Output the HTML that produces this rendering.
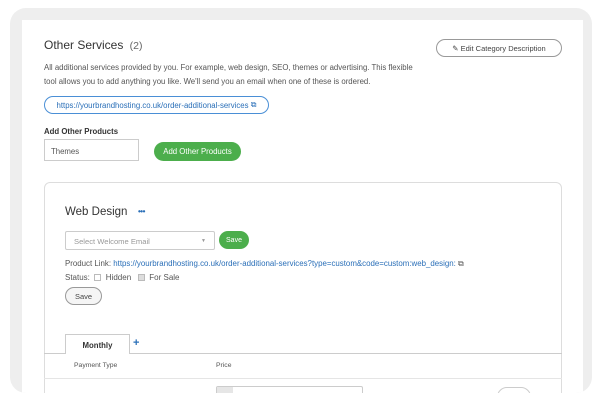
<!DOCTYPE html>
<html><head><style>
*{box-sizing:border-box;margin:0;padding:0}
html,body{width:600px;height:400px;overflow:hidden}
body{background:#fff;font-family:"Liberation Sans",sans-serif;position:relative;color:#333}
.frame{position:absolute;left:10px;top:8px;width:582px;height:385px;background:#eeeeee;border-radius:16px;overflow:hidden}
.inner{position:absolute;left:12px;top:12px;width:561px;height:373px;background:#fff;overflow:hidden}
.a{position:absolute;white-space:nowrap}
.pill{position:absolute;border-radius:10px;font-size:7.5px;display:flex;align-items:center;justify-content:center}
</style></head><body>
<div class="frame"><div class="inner">
<div style="position:absolute;left:-22px;top:-20px;width:600px;height:393px;overflow:hidden">
<div class="a" style="left:44px;top:38px;font-size:12px;color:#333">Other Services <span style="color:#666;font-size:10.5px">&nbsp;(2)</span></div>
<div class="pill" style="left:436px;top:39px;width:126px;height:18px;border:1px solid #999;color:#444">&#9998;&nbsp;Edit Category Description</div>
<div class="a" style="left:44px;top:61px;font-size:7.8px;line-height:13.5px;color:#555">All additional services provided by you. For example, web design, SEO, themes or advertising. This flexible<br>tool allows you to add anything you like. We'll send you an email when one of these is ordered.</div>
<div class="pill" style="left:44px;top:96px;width:225px;height:18px;border:1px solid #4a8fd6;color:#2a6fb8;font-size:7.8px">https://yourbrandhosting.co.uk/order-additional-services&nbsp;<span style="font-size:8px">&#10697;</span></div>
<div class="a" style="left:44px;top:127px;font-size:7.8px;font-weight:bold;color:#333">Add Other Products</div>
<div class="a" style="left:44px;top:139px;width:95px;height:22px;border:1px solid #ccc;font-size:7.8px;color:#555;padding:7px 6px">Themes</div>
<div class="pill" style="left:154px;top:142px;width:87px;height:19px;background:#4cae4c;color:#fff;font-size:7.8px">Add Other Products</div>
<div class="a" style="left:44px;top:182px;width:518px;height:230px;border:1px solid #ddd;border-radius:6px"></div>
<div class="a" style="left:65px;top:206px;font-size:11.5px;color:#333">Web Design</div>
<div class="a" style="left:138px;top:207px;font-size:8px;color:#2a6fb8;font-weight:bold;letter-spacing:-0.5px">•••</div>
<div class="a" style="left:65px;top:231px;width:150px;height:19px;border:1px solid #ccc;border-radius:2px;font-size:7.6px;color:#999;padding:5px 8px">Select Welcome Email<span style="position:absolute;right:8px;top:6px;font-size:5px">&#9660;</span></div>
<div class="pill" style="left:219px;top:231px;width:30px;height:18px;background:#4cae4c;color:#fff;font-size:7px">Save</div>
<div class="a" style="left:65px;top:259px;font-size:7.9px;color:#555">Product Link: <span style="color:#2a6fb8">https://yourbrandhosting.co.uk/order-additional-services?type=custom&amp;code=custom:web_design:</span> &#10697;</div>
<div class="a" style="left:65px;top:273px;font-size:8px;color:#555">Status: &nbsp;<span style="display:inline-block;width:7px;height:7px;border:1px solid #bbb;vertical-align:-1px"></span>&nbsp; Hidden &nbsp;&nbsp;<span style="display:inline-block;width:7px;height:7px;border:1px solid #bbb;background:#ddd;vertical-align:-1px"></span>&nbsp; For Sale</div>
<div class="pill" style="left:65px;top:287px;width:37px;height:18px;border:1px solid #999;color:#444;background:#f5f5f5">Save</div>
<div class="a" style="left:44px;top:353px;width:518px;height:1px;background:#ccc"></div>
<div class="a" style="left:65px;top:334px;width:65px;height:20px;border:1px solid #ccc;border-bottom:none;background:#fff;font-size:7.8px;font-weight:bold;color:#333;text-align:center;padding-top:6px">Monthly</div>
<div class="a" style="left:133px;top:337px;font-size:11px;color:#2a6fb8;font-weight:bold">+</div>
<div class="a" style="left:74px;top:362px;font-size:6.8px;color:#555">Payment Type</div>
<div class="a" style="left:216px;top:362px;font-size:6.8px;color:#555">Price</div>
<div class="a" style="left:44px;top:378px;width:518px;height:1px;background:#e5e5e5"></div>
<div class="a" style="left:216px;top:386px;width:147px;height:20px;border:1px solid #ccc;border-radius:2px"></div>
<div class="a" style="left:217px;top:387px;width:16px;height:18px;background:#e6e6e6"></div>
<div class="a" style="left:497px;top:387px;width:34px;height:20px;border:1px solid #ccc;border-radius:10px"></div>
</div>
</div></div>
</body></html>
